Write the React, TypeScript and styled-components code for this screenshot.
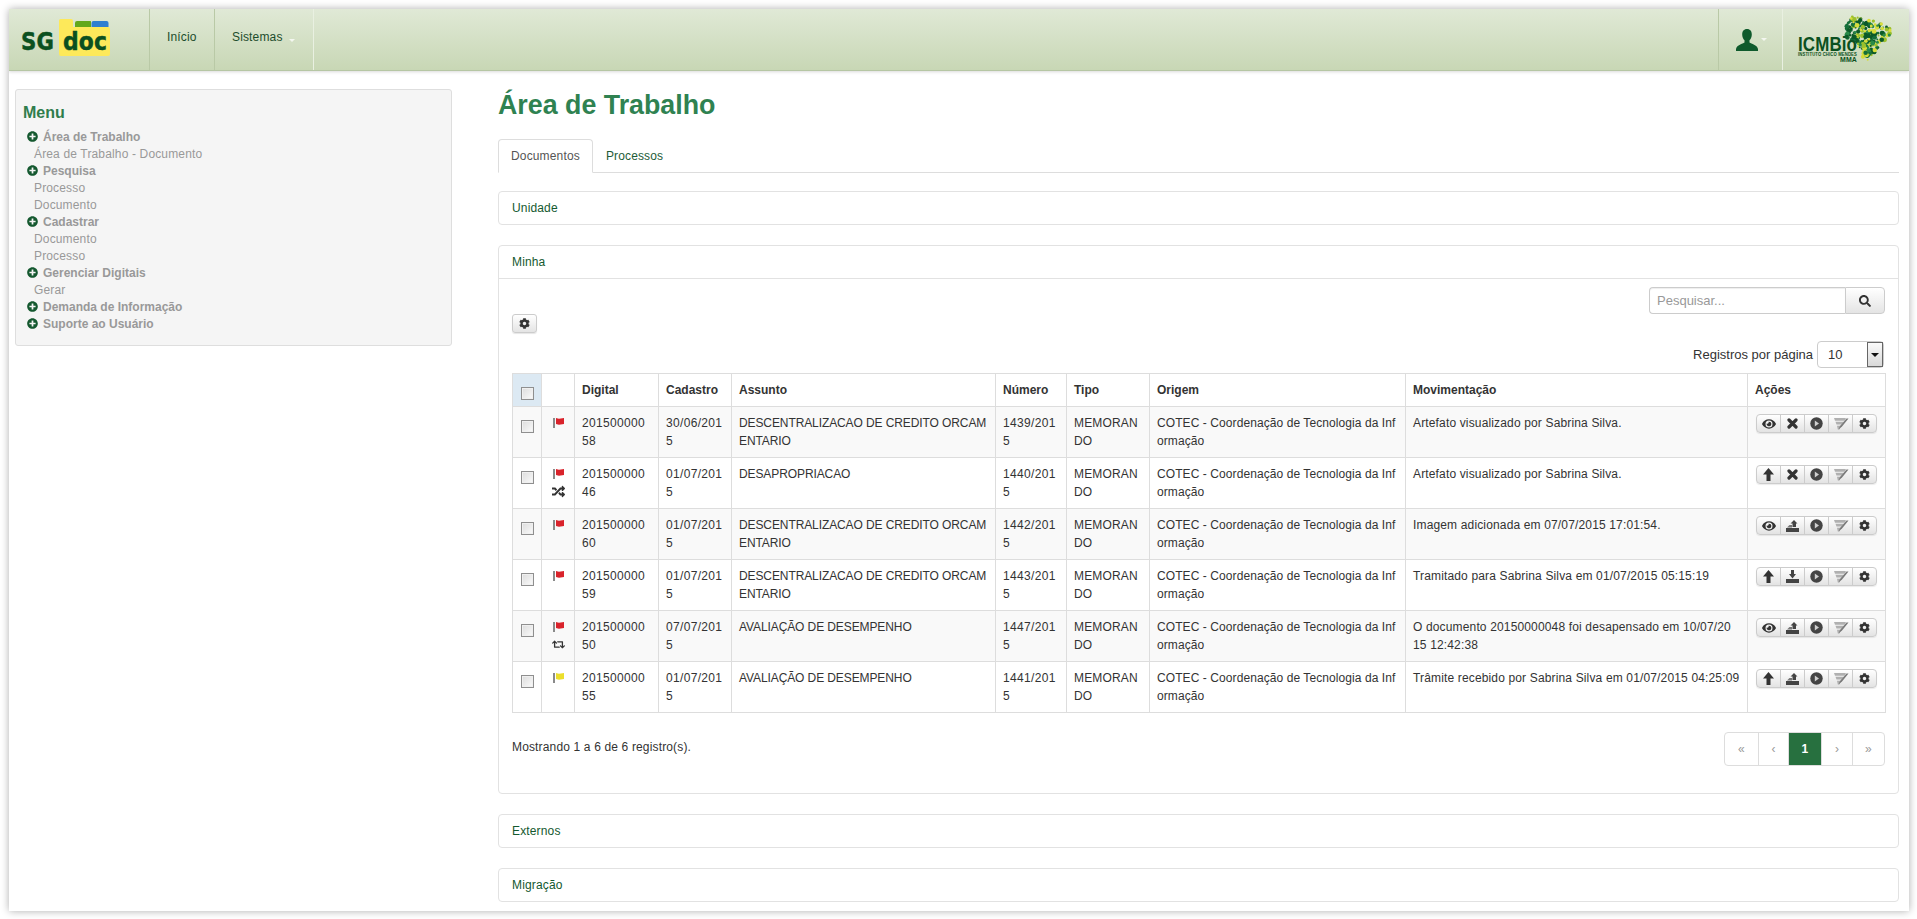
import React from 'react';
import styled, { createGlobalStyle } from 'styled-components';
import { FaCog, FaEye, FaRandom, FaRetweet, FaSearch, FaPlusCircle } from 'react-icons/fa';

const Global = createGlobalStyle`
  html, body { margin: 0; padding: 0; background: #fff; }
  body { font-family: "Liberation Sans", Arial, sans-serif; font-size: 12px; color: #333; letter-spacing: 0.15px; }
`;

const Frame = styled.div`
  margin: 9px 8px 8px 9px;
  width: 1900px;
  height: 902px;
  background: #fff;
  box-shadow: 0 0 8px rgba(0, 0, 0, 0.32);
  overflow: hidden;
`;

const Navbar = styled.header`
  height: 62px;
  box-sizing: border-box;
  display: flex;
  background: linear-gradient(#e0e9d6, #c8d7b5);
  border-bottom: 1px solid #b6c6a4;
  box-shadow: 0 1px 3px rgba(0, 0, 0, 0.15);
`;
const Brand = styled.div`
  width: 140px;
  padding: 10px 0 0 12px;
  box-sizing: border-box;
`;
const NavItem = styled.div<{ $w: number }>`
  width: ${p => p.$w}px;
  box-sizing: border-box;
  border-left: 1px solid #b9c9a6;
  border-right: 1px solid #e9f0e1;
  padding: 20px 0 0 17px;
  margin-right: -1px;
  color: #1d4d2c;
  line-height: 17px;
  display: flex;
  align-items: flex-start;
`;
const Caret = styled.span`
  width: 0;
  height: 0;
  border: 3px solid transparent;
  border-top: 3px solid #f4f7f0;
  border-bottom: 0;
  margin: 10px 0 0 6px;
`;
const NavSpacer = styled.div`
  flex: 1;
  border-left: 1px solid #e9f0e1;
`;
const UserCell = styled.div`
  width: 65px;
  box-sizing: border-box;
  border-left: 1px solid #b9c9a6;
  border-right: 1px solid #e9f0e1;
  padding: 20px 0 0 17px;
  display: flex;
  align-items: flex-start;
`;
const UserCaret = styled(Caret)`
  margin: 9px 0 0 3px;
`;
const OrgCell = styled.div`
  flex: none;
  width: 126px;
`;

const Content = styled.div`
  display: flex;
  align-items: flex-start;
`;

const Sidebar = styled.aside`
  width: 437px;
  box-sizing: border-box;
  margin: 18px 46px 0 6px;
  padding: 12px 7px 13px;
  background: #f5f5f5;
  border: 1px solid #dedede;
  border-radius: 3px;
`;
const MenuTitle = styled.h3`
  margin: 0 0 4px;
  font-size: 16px;
  line-height: 22px;
  font-weight: bold;
  color: #2f7d4c;
  letter-spacing: 0;
`;
const MenuList = styled.ul`
  list-style: none;
  margin: 0;
  padding: 0;
`;
const MenuHead = styled.li`
  height: 17px;
  display: flex;
  align-items: center;
  gap: 5px;
  padding-left: 4px;
  font-weight: bold;
  color: #999;
  letter-spacing: 0;
  svg { color: #14582f; font-size: 11px; }
`;
const MenuSub = styled.li`
  height: 17px;
  line-height: 19px;
  padding-left: 11px;
  color: #999;
`;

const Main = styled.main`
  width: 1401px;
`;
const Title = styled.h1`
  margin: 17px 0 0;
  height: 34px;
  font-size: 26.8px;
  line-height: 34px;
  font-weight: bold;
  color: #2f8251;
  letter-spacing: 0;
`;
const Tabs = styled.nav`
  margin-top: 17px;
  height: 34px;
  box-sizing: border-box;
  display: flex;
  border-bottom: 1px solid #ddd;
`;
const Tab = styled.div<{ $active?: boolean }>`
  height: 34px;
  box-sizing: border-box;
  padding: 0 12px;
  line-height: 32px;
  border: 1px solid ${p => (p.$active ? '#ddd' : 'transparent')};
  border-bottom-color: ${p => (p.$active ? '#fff' : 'transparent')};
  border-radius: 4px 4px 0 0;
  background: ${p => (p.$active ? '#fff' : 'transparent')};
  color: ${p => (p.$active ? '#555' : '#1d5c38')};
`;
const Panel = styled.section<{ $mt: number }>`
  margin-top: ${p => p.$mt}px;
  border: 1px solid #e2e2e2;
  border-radius: 4px;
`;
const PanelHead = styled.div<{ $open?: boolean }>`
  height: ${p => (p.$open ? 33 : 32)}px;
  box-sizing: border-box;
  padding: 0 13px;
  line-height: 33px;
  color: #14592f;
  border-bottom: ${p => (p.$open ? '1px solid #e2e2e2' : '0')};
`;
const PanelBody = styled.div`
  padding: 8px 13px 0;
  height: 514px;
  box-sizing: border-box;
`;

const SearchRow = styled.div`
  display: flex;
  justify-content: flex-end;
`;
const SearchInput = styled.div`
  width: 196px;
  height: 27px;
  box-sizing: border-box;
  padding: 0 7px;
  line-height: 26px;
  font-size: 13px;
  letter-spacing: 0;
  color: #999;
  border: 1px solid #ccc;
  border-right: 0;
  border-radius: 4px 0 0 4px;
  box-shadow: inset 0 1px 1px rgba(0, 0, 0, 0.07);
`;
const SearchButton = styled.div`
  width: 40px;
  height: 27px;
  box-sizing: border-box;
  display: flex;
  align-items: center;
  justify-content: center;
  font-size: 12px;
  color: #333;
  border: 1px solid #ccc;
  border-radius: 0 4px 4px 0;
  background: linear-gradient(#fff, #e4e4e4);
`;
const CogButton = styled.div`
  width: 25px;
  height: 19px;
  box-sizing: border-box;
  display: flex;
  align-items: center;
  justify-content: center;
  font-size: 11px;
  color: #333;
  border: 1px solid #ccc;
  border-radius: 3px;
  background: linear-gradient(#fff, #e4e4e4);
  box-shadow: 0 1px 1px rgba(0, 0, 0, 0.1);
`;
const PageSizeRow = styled.div`
  margin-top: 8px;
  display: flex;
  justify-content: flex-end;
  align-items: center;
  gap: 4px;
  padding-right: 1px;
  height: 27px;
  font-size: 13px;
  letter-spacing: 0;
`;
const SelectBox = styled.div`
  width: 67px;
  height: 27px;
  box-sizing: border-box;
  display: flex;
  justify-content: space-between;
  padding-left: 10px;
  line-height: 25px;
  border: 1px solid #ccc;
  border-radius: 4px;
`;
const SelectArrow = styled.span`
  width: 16px;
  height: 25px;
  box-sizing: border-box;
  display: flex;
  align-items: center;
  justify-content: center;
  border: 1px solid #666;
  background: linear-gradient(#fafafa, #d8d8d8);
  &::after {
    content: '';
    border: 4px solid transparent;
    border-top: 4px solid #111;
    border-bottom: 0;
  }
`;

const Table = styled.table`
  margin-top: 5px;
  width: 1373px;
  table-layout: fixed;
  border-collapse: collapse;
  word-break: break-all;
  th, td {
    border: 1px solid #ddd;
    padding: 7px 7px 0;
    line-height: 18px;
    vertical-align: top;
    text-align: left;
  }
  th { height: 33px; box-sizing: border-box; font-weight: bold; letter-spacing: 0; }
  td { height: 51px; box-sizing: border-box; }
`;
const Row = styled.tr<{ $odd: boolean }>`
  background: ${p => (p.$odd ? '#f9f9f9' : '#fff')};
`;
const SelectHead = styled.th`
  background: #dce9f3;
`;
const DigitCell = styled.td`
  letter-spacing: 0.33px;
`;
const SubjectCell = styled.td`
  letter-spacing: -0.1px;
`;
const OriginCell = styled.td`
  letter-spacing: 0.08px;
`;
const MovCell = styled.td`
  white-space: pre-wrap;
`;
const Check = styled.span`
  display: block;
  width: 13px;
  height: 13px;
  box-sizing: border-box;
  margin: 6px 0 0 1px;
  border: 1px solid #8f8f8f;
  background: linear-gradient(135deg, #dcdcdc, #fbfbfb);
  box-shadow: inset 0 0 0 1px #f0f0f0;
`;
const IconStack = styled.div`
  display: flex;
  flex-direction: column;
  align-items: center;
  gap: 6px;
  margin: 4px -4px 0;
  color: #333;
  font-size: 13px;
`;
const BtnGroup = styled.div`
  display: flex;
  width: 121px;
  height: 19px;
  margin-left: 1px;
  box-sizing: border-box;
  border: 1px solid #ccc;
  border-radius: 4px;
  background: linear-gradient(#fff, #e3e3e3);
  box-shadow: 0 1px 1px rgba(0, 0, 0, 0.08);
`;
const Btn = styled.span`
  flex: 1;
  display: flex;
  align-items: center;
  justify-content: center;
  color: #333;
  font-size: 11px;
  & + & { border-left: 1px solid #ccc; }
`;

const Footer = styled.div`
  margin-top: 19px;
  display: flex;
  justify-content: space-between;
  align-items: flex-start;
`;
const Info = styled.div`
  line-height: 17px;
  margin-top: 7px;
`;
const Pager = styled.div`
  display: flex;
  height: 34px;
  border: 1px solid #ddd;
  border-radius: 4px;
  box-sizing: border-box;
`;
const PageLink = styled.span<{ $w: number; $active?: boolean }>`
  width: ${p => p.$w}px;
  box-sizing: border-box;
  display: flex;
  align-items: center;
  justify-content: center;
  font-size: 12px;
  font-weight: ${p => (p.$active ? 'bold' : 'normal')};
  color: ${p => (p.$active ? '#fff' : '#999')};
  background: ${p => (p.$active ? '#27703f' : 'transparent')};
  & + & { border-left: 1px solid #ddd; }
`;

const SgLogo = () => (
  <svg width="100" height="40" viewBox="0 0 100 40">
    <path d="M38 1.500a1.500 1.500 0 0 1 1.500-1.500H50a2 2 0 0 1 2 2v6h35a2 2 0 0 1 2 2v25a2 2 0 0 1-2 2H40a2 2 0 0 1-2-2z" fill="#fde95a" />
    <path d="M54 8V4a2 2 0 0 1 2-2h13a2 2 0 0 1 1 .3V8z" fill="#62a81a" />
    <path d="M70.500 8V4a2 2 0 0 1 2-2h13a2 2 0 0 1 2 2v4z" fill="#2f7fd0" />
    <text x="0" y="31" fontFamily="'DejaVu Sans'" fontWeight="bold" fontSize="25" fill="#0b5020" stroke="#0b5020" strokeWidth="0.5" textLength="33" lengthAdjust="spacingAndGlyphs">SG</text>
    <text x="42" y="31" fontFamily="'DejaVu Sans'" fontWeight="bold" fontSize="25" fill="#0b5020" stroke="#0b5020" strokeWidth="0.5" textLength="44" lengthAdjust="spacingAndGlyphs">doc</text>
  </svg>
);

const userIcon = (
  <svg width="22" height="22" viewBox="0 0 22 22">
    <path d="M11 0c3.300 0 4.800 2.300 4.800 5.400 0 2.500-.9 4.500-2.300 5.900v2.300c1.900 1.300 7.500 2.300 8.500 6.400v2H0v-2c1-4.100 6.600-5.100 8.500-6.400v-2.300C7.100 9.900 6.200 7.900 6.200 5.400 6.200 2.300 7.700 0 11 0z" fill="#0f5a2c" />
  </svg>
);

// Brazil shape and the scattered dots of the ICMBio mark.
const brazil = [[68, 8], [76, 6], [84, 11], [96, 13], [108, 20], [106, 28], [98, 34], [94, 42], [88, 48], [84, 53], [78, 50], [80, 42], [74, 36], [66, 32], [61, 24], [64, 14]];
const inside = (x: number, y: number) => {
  let c = false;
  for (let i = 0, j = brazil.length - 1; i < brazil.length; j = i++) {
    const [xi, yi] = brazil[i];
    const [xj, yj] = brazil[j];
    if (yi > y !== yj > y && x < ((xj - xi) * (y - yi)) / (yj - yi) + xi) c = !c;
  }
  return c;
};
const dots: { x: number; y: number; r: number; c: string }[] = [];
{
  let s = 17;
  const rnd = () => ((s = (s * 16807) % 2147483647) % 1000) / 1000;
  const cols = ['#0c5a28', '#15703a', '#9cc02c', '#d7dd3a', '#2a8a48', '#0c5a28'];
  while (dots.length < 230) {
    const x = 58 + rnd() * 54;
    const y = 4 + rnd() * 52;
    if (inside(x, y)) dots.push({ x, y, r: 0.9 + rnd() * 1.6, c: cols[Math.floor(rnd() * cols.length)] });
  }
}
const IcmbioLogo = () => (
  <svg width="126" height="61" viewBox="0 0 126 61">
    {dots.map((d, i) => <circle key={i} cx={d.x} cy={d.y} r={d.r} fill={d.c} />)}
    <text x="15" y="41.500" fontFamily="'Liberation Sans'" fontWeight="bold" fontSize="20" fill="#0b5020" textLength="59" lengthAdjust="spacingAndGlyphs">ICMBio</text>
    <text x="15" y="47" fontFamily="'Liberation Sans'" fontWeight="bold" fontSize="4.500" fill="#0b5020" textLength="59" lengthAdjust="spacingAndGlyphs">INSTITUTO CHICO MENDES</text>
    <text x="57" y="53" fontFamily="'Liberation Sans'" fontWeight="bold" fontSize="7" fill="#0b5020" textLength="17" lengthAdjust="spacingAndGlyphs">MMA</text>
  </svg>
);

const Flag = ({ color }: { color: string }) => (
  <svg width="11" height="10" viewBox="0 0 11 10">
    <rect x="0" y="0" width="2" height="10" fill="#8a8a8a" />
    <path d="M3 0l3 .8 5-.8v6l-5 .8-3-.8z" fill={color} />
  </svg>
);
const EyeIcon = () => <FaEye size={14} />;
const CrossIcon = () => (
  <svg width="11" height="11" viewBox="0 0 11 11">
    <path d="M2 2l7 7M9 2l-7 7" stroke="#333" strokeWidth="3.200" strokeLinecap="round" />
  </svg>
);
const UpIcon = () => (
  <svg width="11" height="13" viewBox="0 0 11 13">
    <path d="M5.500 0l5.500 6.500H7.500V13h-4V6.500H0z" fill="#333" />
  </svg>
);
const DiscIcon = () => (
  <svg width="13" height="13" viewBox="0 0 13 13">
    <circle cx="6.500" cy="6.500" r="6.200" fill="#444" />
    <path d="M4.800 3.600l4.200 2.900-4.200 2.900z" fill="#cfcfcf" />
  </svg>
);
const RibbonIcon = () => (
  <svg width="16" height="14" viewBox="0 0 16 14">
    <path d="M1 1h12l-1.500 2.700H2zM2.500 4.800h8.200L9 7.500H3.500zM4 8.700h4.200L6.500 12.500H4.800z" fill="#b0b0b0" />
    <path d="M15.500 1.500L9 9.500l-3.500 3 1.500-3.500 6.500-7.500z" fill="#7a7a7a" />
  </svg>
);
const TrayOut = () => (
  <svg width="13" height="12" viewBox="0 0 13 12">
    <path d="M0 8h13v4H0z" fill="#444" />
    <path d="M8 0l3.500 3.500H10V7H6.500V3.500H4.500z" fill="#444" />
    <path d="M1 7.400L3.500 5H6v2.400z" fill="#777" />
  </svg>
);
const TrayIn = () => (
  <svg width="13" height="13" viewBox="0 0 13 13">
    <path d="M0 9h13v4H0z" fill="#444" />
    <path d="M5 0h3v4h2L6.500 8.500 3 4h2z" fill="#444" />
  </svg>
);

const menu: [string, string[]][] = [
  ['Área de Trabalho', ['Área de Trabalho - Documento']],
  ['Pesquisa', ['Processo', 'Documento']],
  ['Cadastrar', ['Documento', 'Processo']],
  ['Gerenciar Digitais', ['Gerar']],
  ['Demanda de Informação', []],
  ['Suporte ao Usuário', []],
];

const DESC = 'DESCENTRALIZACAO DE CREDITO ORCAMENTARIO';
const AVAL = 'AVALIAÇÃO DE DESEMPENHO';
const COTEC = 'COTEC - Coordenação de Tecnologia da Informação';
type Rec = {
  digital: string; date: string; subject: string; num: string; mov: string;
  flag: string; extra?: 'random' | 'retweet'; first: 'eye' | 'up'; second: 'x' | 'out' | 'in';
};
const RED = '#d9232b';
const rows: Rec[] = [
  { digital: '20150000058', date: '30/06/2015', subject: DESC, num: '1439/2015', mov: 'Artefato visualizado por Sabrina Silva.', flag: RED, first: 'eye', second: 'x' },
  { digital: '20150000046', date: '01/07/2015', subject: 'DESAPROPRIACAO', num: '1440/2015', mov: 'Artefato visualizado por Sabrina Silva.', flag: RED, extra: 'random', first: 'up', second: 'x' },
  { digital: '20150000060', date: '01/07/2015', subject: DESC, num: '1442/2015', mov: 'Imagem adicionada em 07/07/2015 17:01:54.', flag: RED, first: 'eye', second: 'out' },
  { digital: '20150000059', date: '01/07/2015', subject: DESC, num: '1443/2015', mov: 'Tramitado para Sabrina Silva em 01/07/2015 05:15:19', flag: RED, first: 'up', second: 'in' },
  { digital: '20150000050', date: '07/07/2015', subject: AVAL, num: '1447/2015', mov: 'O documento 20150000048 foi desapensado em 10/07/20\n15 12:42:38', flag: RED, extra: 'retweet', first: 'eye', second: 'out' },
  { digital: '20150000055', date: '01/07/2015', subject: AVAL, num: '1441/2015', mov: 'Trâmite recebido por Sabrina Silva em 01/07/2015 04:25:09', flag: '#ecdf2c', first: 'up', second: 'out' },
];
const widths = [29, 33, 84, 73, 264, 71, 83, 256, 342, 138];
const heads = ['Digital', 'Cadastro', 'Assunto', 'Número', 'Tipo', 'Origem', 'Movimentação', 'Ações'];
const pages: [string, number, boolean?][] = [['«', 33], ['‹', 30], ['1', 33, true], ['›', 31], ['»', 32]];

export default function App() {
  return (
    <>
      <Global />
      <Frame>
        <Navbar>
          <Brand><SgLogo /></Brand>
          <NavItem $w={66}>Início</NavItem>
          <NavItem $w={100}>Sistemas<Caret /></NavItem>
          <NavSpacer />
          <UserCell>{userIcon}<UserCaret /></UserCell>
          <OrgCell><IcmbioLogo /></OrgCell>
        </Navbar>
        <Content>
          <Sidebar>
            <MenuTitle>Menu</MenuTitle>
            <MenuList>
              {menu.map(([h, subs]) => (
                <React.Fragment key={h}>
                  <MenuHead><FaPlusCircle />{h}</MenuHead>
                  {subs.map(s => <MenuSub key={s}>{s}</MenuSub>)}
                </React.Fragment>
              ))}
            </MenuList>
          </Sidebar>
          <Main>
            <Title>Área de Trabalho</Title>
            <Tabs>
              <Tab $active>Documentos</Tab>
              <Tab>Processos</Tab>
            </Tabs>
            <Panel $mt={18}><PanelHead>Unidade</PanelHead></Panel>
            <Panel $mt={20}>
              <PanelHead $open>Minha</PanelHead>
              <PanelBody>
                <SearchRow>
                  <SearchInput>Pesquisar...</SearchInput>
                  <SearchButton><FaSearch /></SearchButton>
                </SearchRow>
                <CogButton><FaCog /></CogButton>
                <PageSizeRow>
                  Registros por página
                  <SelectBox>10<SelectArrow /></SelectBox>
                </PageSizeRow>
                <Table>
                  <colgroup>{widths.map((w, i) => <col key={i} width={w} />)}</colgroup>
                  <thead>
                    <tr>
                      <SelectHead><Check /></SelectHead>
                      <th />
                      {heads.map(h => <th key={h}>{h}</th>)}
                    </tr>
                  </thead>
                  <tbody>
                    {rows.map((r, i) => (
                      <Row key={r.digital} $odd={i % 2 === 0}>
                        <td><Check /></td>
                        <td>
                          <IconStack>
                            <Flag color={r.flag} />
                            {r.extra === 'random' && <FaRandom />}
                            {r.extra === 'retweet' && <FaRetweet />}
                          </IconStack>
                        </td>
                        <DigitCell>{r.digital}</DigitCell>
                        <DigitCell>{r.date}</DigitCell>
                        <SubjectCell>{r.subject}</SubjectCell>
                        <DigitCell>{r.num}</DigitCell>
                        <td>MEMORANDO</td>
                        <OriginCell>{COTEC}</OriginCell>
                        <MovCell>{r.mov}</MovCell>
                        <td>
                          <BtnGroup>
                            <Btn>{r.first === 'eye' ? <EyeIcon /> : <UpIcon />}</Btn>
                            <Btn>{r.second === 'x' ? <CrossIcon /> : r.second === 'out' ? <TrayOut /> : <TrayIn />}</Btn>
                            <Btn><DiscIcon /></Btn>
                            <Btn><RibbonIcon /></Btn>
                            <Btn><FaCog /></Btn>
                          </BtnGroup>
                        </td>
                      </Row>
                    ))}
                  </tbody>
                </Table>
                <Footer>
                  <Info>Mostrando 1 a 6 de 6 registro(s).</Info>
                  <Pager>
                    {pages.map(([t, w, a]) => <PageLink key={t} $w={w} $active={a}>{t}</PageLink>)}
                  </Pager>
                </Footer>
              </PanelBody>
            </Panel>
            <Panel $mt={20}><PanelHead>Externos</PanelHead></Panel>
            <Panel $mt={20}><PanelHead>Migração</PanelHead></Panel>
          </Main>
        </Content>
      </Frame>
    </>
  );
}
